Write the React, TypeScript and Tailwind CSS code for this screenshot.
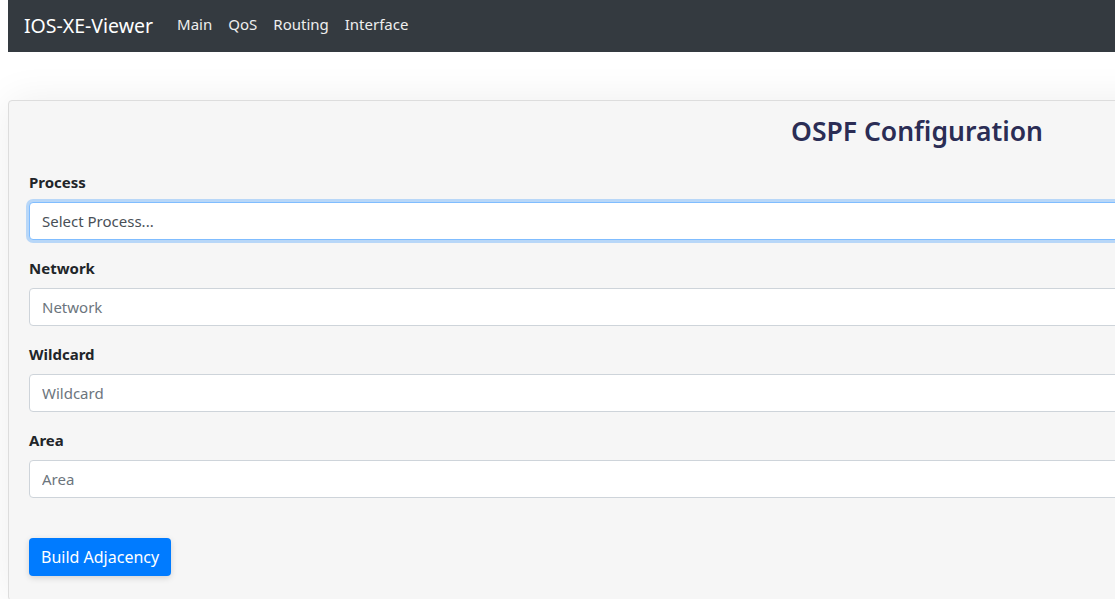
import { useState } from 'react';

const fields = [
  { label: 'Network', placeholder: 'Network' },
  { label: 'Wildcard', placeholder: 'Wildcard' },
  { label: 'Area', placeholder: 'Area' },
];

export default function App() {
  const [process, setProcess] = useState('');

  return (
    <div className="w-[1115px] h-[599px] overflow-hidden bg-white font-['Noto_Sans',sans-serif]">
      <div className="w-[1834px] px-2">
        <nav className="h-[52px] bg-[#343a40] flex items-center px-4">
          <span className="text-white text-[19.5px] mr-[24px]">IOS-XE-Viewer</span>
          <div className="flex items-center gap-4 text-[15px] text-[#eeeeee] pb-[3px]">
            <a href="#main">Main</a>
            <a href="#qos">QoS</a>
            <a href="#routing">Routing</a>
            <a href="#interface">Interface</a>
          </div>
        </nav>

        <div className="mt-[48px] bg-[#f6f6f6] border border-[#dddddd] rounded-[4px] shadow-[0_0_40px_rgba(0,0,0,0.07)] px-5 pt-[13px] pb-6">
          <h2 className="text-center text-[26.5px] font-semibold leading-[34px] text-[#2b2d55] mb-[22px]">
            OSPF Configuration
          </h2>

          <div className="mb-4">
            <label className="block text-[15px] font-bold leading-6 text-[#212529] mb-2">Process</label>
            <select
              value={process}
              onChange={(e) => setProcess(e.target.value)}
              className="block w-full h-[38px] px-3 text-[15px] text-[#495057] bg-white border border-[#80bdff] rounded-[4px] shadow-[0_0_0_3px_rgba(0,123,255,0.25)] appearance-none outline-none"
            >
              <option value="">Select Process...</option>
              <option value="1">1</option>
            </select>
          </div>

          {fields.map((f) => (
            <div key={f.label} className="mb-4">
              <label className="block text-[15px] font-bold leading-6 text-[#212529] mb-2">{f.label}</label>
              <input
                placeholder={f.placeholder}
                className="block w-full h-[38px] px-3 text-[15px] text-[#495057] placeholder:text-[#6c757d] bg-white border border-[#ced4da] rounded-[4px] outline-none"
              />
            </div>
          ))}

          <button className="mt-6 h-[38px] px-3 text-[16px] text-white bg-[#007bff] rounded-[4px] shadow-[0_2px_6px_rgba(0,0,0,0.15)]">
            Build Adjacency
          </button>
        </div>
      </div>
    </div>
  );
}
